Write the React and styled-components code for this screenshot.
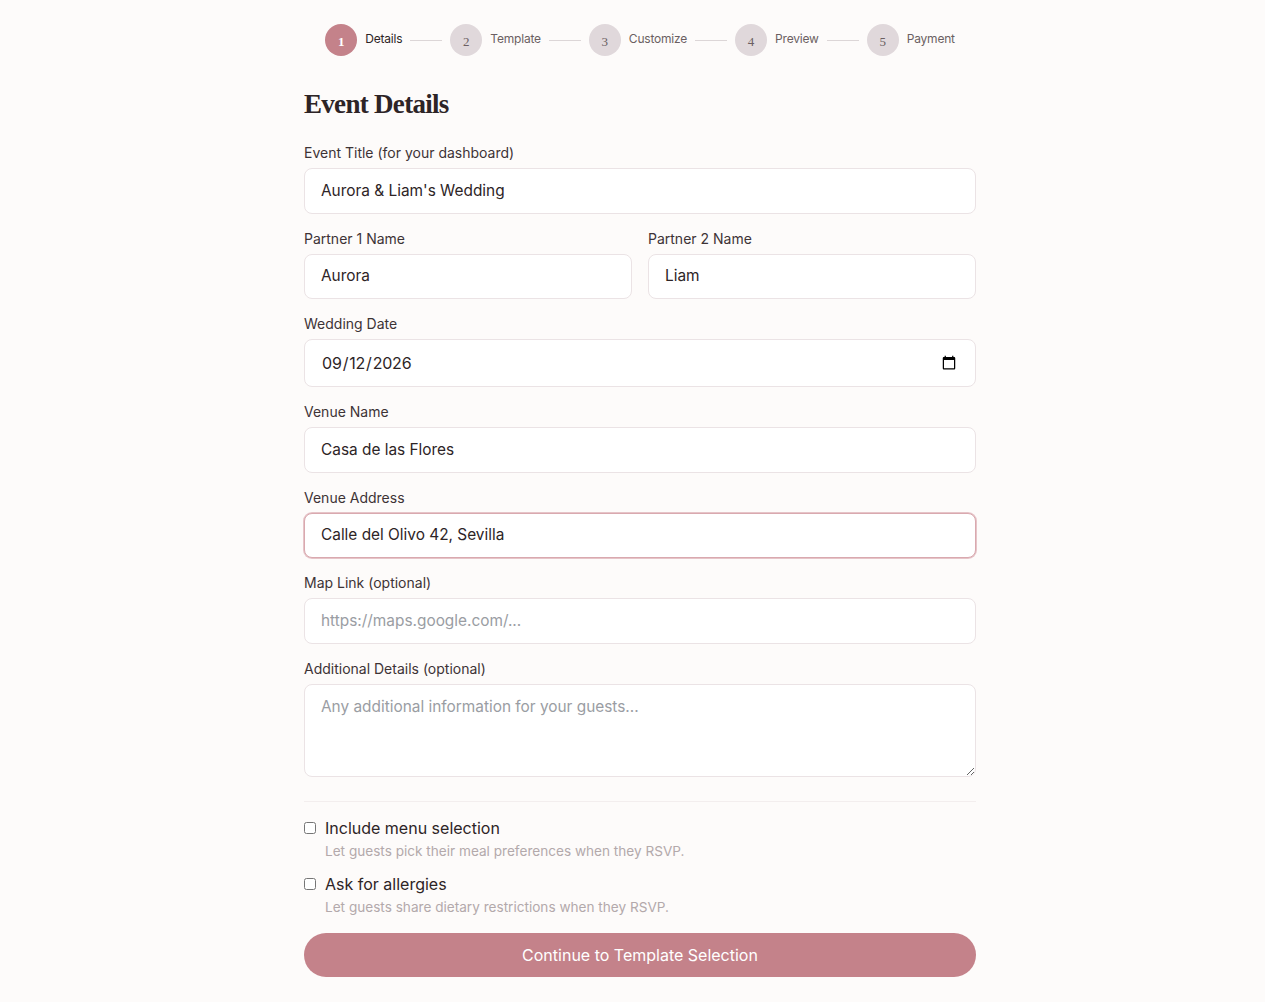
import React from 'react';
import styled, { createGlobalStyle } from 'styled-components';

const sans = `Inter, "Liberation Sans", sans-serif`;
const serif = `"Liberation Serif", serif`;

/***************************************
  COMPONENTS
***************************************/

const Global = createGlobalStyle`
  html { overflow-x: hidden; }
  html, body { margin: 0; padding: 0; background: #fdfbfa; }
  body { width: 1280px; }
  * { box-sizing: border-box; }
`;

const Page = styled.div`
  width: 672px;
  margin: 0 auto;
  padding-top: 24px;
  padding-bottom: 24px;
  font-family: ${sans};
  color: #2d2426;
`;

const Stepper = styled.ol`
  display: flex;
  align-items: center;
  justify-content: center;
  gap: 8px;
  list-style: none;
  margin: 0 0 32px;
  padding: 0;
`;

const Circle = styled.span`
  display: flex;
  align-items: center;
  justify-content: center;
  width: 32px;
  height: 32px;
  padding-top: 3px;
  border-radius: 50%;
  font-family: ${serif};
  font-size: 13px;
  font-weight: ${(p) => (p.$active ? 700 : 400)};
  color: ${(p) => (p.$active ? '#fff' : '#6b5f62')};
  background: ${(p) => (p.$active ? '#c4828a' : '#e0d8db')};
`;

const StepLabel = styled.span`
  padding-bottom: 3px;
  font-size: 12px;
  letter-spacing: -0.2px;
  color: ${(p) => (p.$active ? '#2d2426' : '#6b5f62')};
`;

const StepLine = styled.span`
  width: 32px;
  height: 1px;
  background: #dcd6d7;
`;

const Title = styled.h2`
  margin: 0 0 24px;
  font-family: ${serif};
  font-size: 27px;
  line-height: 32px;
  font-weight: 700;
  letter-spacing: -0.7px;
  color: #2d2426;
`;

const Form = styled.form`
  display: flex;
  flex-direction: column;
  gap: 16px;
`;

const Row = styled.div`
  display: grid;
  grid-template-columns: 1fr 1fr;
  gap: 16px;
`;

const Field = styled.div`
  display: flex;
  flex-direction: column;
  gap: 4px;
`;

const Label = styled.label`
  padding-bottom: 2px;
  font-size: 14px;
  line-height: 18px;
  color: #3d3336;
`;

const Input = styled.input`
  width: 100%;
  height: 45.5px;
  padding: 0 16px 1px;
  border: 1px solid #ebe3e5;
  border-radius: 8px;
  background: #fff;
  font-family: ${sans};
  font-size: 15.4px;
  color: #2d2426;
  outline: none;

  &::placeholder { color: #9a9da3; opacity: 1; }
`;

const DateInput = styled(Input)`
  height: 48px;
  padding: 0 16px;
  font-size: 16px;
  letter-spacing: -0.2px;
`;

const FocusedInput = styled(Input)`
  border-color: #d9a9af;
  box-shadow: 0 0 0 1px #e6c4c8;
`;

const TextArea = styled.textarea`
  display: block;
  width: 100%;
  height: 93.5px;
  padding: 12px 16px;
  border: 1px solid #ebe3e5;
  border-radius: 8px;
  background: #fff;
  font-family: ${sans};
  font-size: 15.4px;
  color: #2d2426;
  outline: none;

  &::placeholder { color: #9a9da3; opacity: 1; }
`;

const Options = styled.div`
  display: flex;
  flex-direction: column;
  gap: 11px;
  margin-top: 8px;
  padding-top: 14px;
  border-top: 1px solid #f3eeee;
`;

const Option = styled.div`
  display: grid;
  grid-template-columns: 12px 1fr;
  column-gap: 9px;
  align-items: center;
`;

const Check = styled.input`
  width: 12px;
  height: 12px;
  margin: 0;
`;

const OptionName = styled.label`
  font-size: 16px;
  line-height: 24px;
  color: #2d2426;
`;

const OptionHint = styled.p`
  grid-column: 2;
  margin: 0;
  padding-top: 1px;
  font-size: 13.6px;
  line-height: 20px;
  color: #b3a9ab;
`;

const Submit = styled.button`
  width: 100%;
  height: 44px;
  padding-bottom: 2px;
  border: 0;
  border-radius: 22px;
  background: #c4828a;
  color: #fff;
  font-family: ${sans};
  font-size: 16px;
  font-weight: 400;
`;

/***************************************
  MAIN
***************************************/

const steps = ['Details', 'Template', 'Customize', 'Preview', 'Payment'];

const App = () => {
  return (
    <Page>
      <Global />
      <Stepper>
        {steps.map((step, i) => (
          <React.Fragment key={step}>
            <Circle $active={i === 0}>{i + 1}</Circle>
            <StepLabel $active={i === 0}>{step}</StepLabel>
            {i < steps.length - 1 && <StepLine />}
          </React.Fragment>
        ))}
      </Stepper>
      <Title>Event Details</Title>
      <Form>
        <Field>
          <Label>Event Title (for your dashboard)</Label>
          <Input defaultValue="Aurora & Liam's Wedding" />
        </Field>
        <Row>
          <Field>
            <Label>Partner 1 Name</Label>
            <Input defaultValue="Aurora" />
          </Field>
          <Field>
            <Label>Partner 2 Name</Label>
            <Input defaultValue="Liam" />
          </Field>
        </Row>
        <Field>
          <Label>Wedding Date</Label>
          <DateInput type="date" defaultValue="2026-09-12" />
        </Field>
        <Field>
          <Label>Venue Name</Label>
          <Input defaultValue="Casa de las Flores" />
        </Field>
        <Field>
          <Label>Venue Address</Label>
          <FocusedInput defaultValue="Calle del Olivo 42, Sevilla" />
        </Field>
        <Field>
          <Label>Map Link (optional)</Label>
          <Input placeholder="https://maps.google.com/..." />
        </Field>
        <Field>
          <Label>Additional Details (optional)</Label>
          <TextArea placeholder="Any additional information for your guests..." />
        </Field>
        <Options>
          <Option>
            <Check type="checkbox" />
            <OptionName>Include menu selection</OptionName>
            <OptionHint>Let guests pick their meal preferences when they RSVP.</OptionHint>
          </Option>
          <Option>
            <Check type="checkbox" />
            <OptionName>Ask for allergies</OptionName>
            <OptionHint>Let guests share dietary restrictions when they RSVP.</OptionHint>
          </Option>
        </Options>
        <Submit type="button">Continue to Template Selection</Submit>
      </Form>
    </Page>
  );
};

/**************************************/

export default App;
